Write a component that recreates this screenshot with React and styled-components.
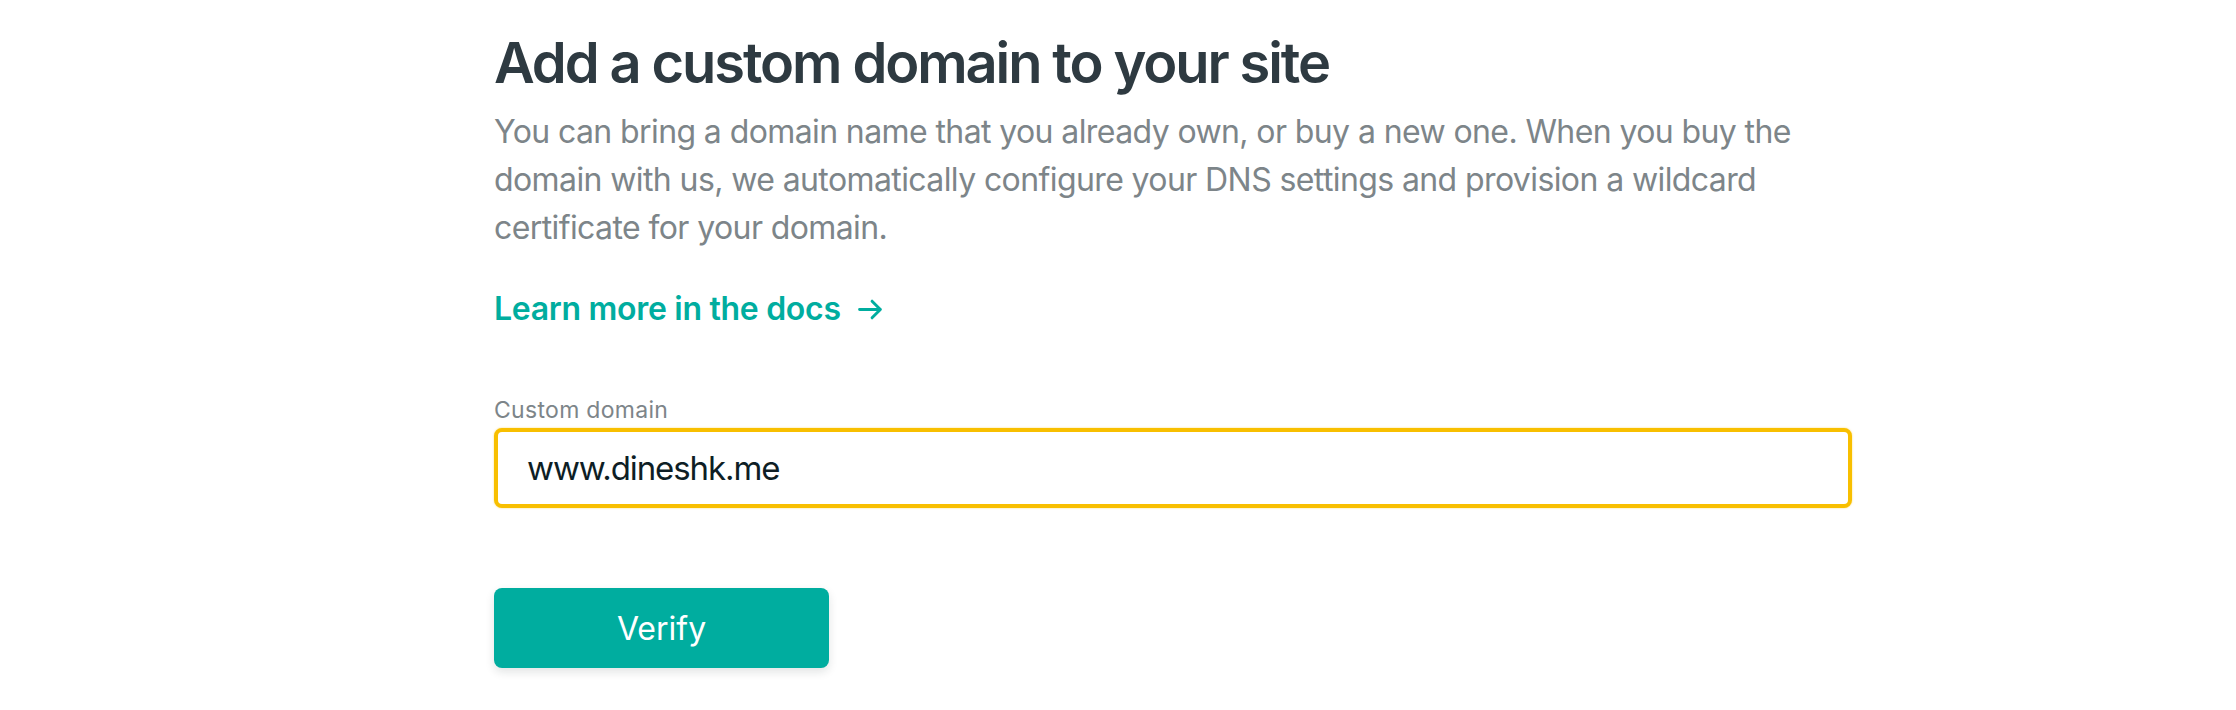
import styled, { createGlobalStyle } from "styled-components";

// page reset
const GlobalStyle = createGlobalStyle`
  html, body {
    margin: 0;
    padding: 0;
    background: #ffffff;
  }
  body {
    font-family: Inter, "Noto Sans", "Liberation Sans", sans-serif;
    -webkit-font-smoothing: antialiased;
  }
`;

const Page = styled.main`
  width: 2236px;
  height: 710px;
  box-sizing: border-box;
  padding: 31px 0 0 494px;
  overflow: hidden;
`;

const Panel = styled.section`
  width: 1358px;
  display: flex;
  flex-direction: column;
  align-items: flex-start;
`;

const Title = styled.h1`
  margin: 0;
  font-size: 56px;
  line-height: 64px;
  font-weight: 600;
  letter-spacing: -2.1px;
  color: #2e3a41;
`;

const Lead = styled.p`
  margin: 13px 0 0;
  font-size: 32px;
  line-height: 48px;
  font-weight: 400;
  letter-spacing: -0.6px;
  color: #7d8589;
`;

const DocsLink = styled.a`
  margin-top: 37px;
  display: inline-flex;
  align-items: center;
  gap: 17px;
  font-size: 32px;
  line-height: 40px;
  font-weight: 600;
  letter-spacing: -0.3px;
  color: #00ad9f;
  text-decoration: none;
  cursor: pointer;
`;

const Field = styled.div`
  margin-top: 67px;
  width: 100%;
  display: flex;
  flex-direction: column;
  gap: 4px;
`;

const Label = styled.label`
  font-size: 23px;
  line-height: 28px;
  letter-spacing: 0.3px;
  color: #7d8589;
`;

const TextInput = styled.input`
  box-sizing: border-box;
  width: 100%;
  height: 80px;
  padding: 0 29px;
  border: 4px solid #f8bf00;
  border-radius: 8px;
  box-shadow: 0 0 2px rgba(248, 191, 0, 0.6);
  font-family: inherit;
  font-size: 33px;
  letter-spacing: -1.1px;
  color: #0e1e25;
  background: #ffffff;
  outline: none;
`;

const PrimaryButton = styled.button`
  margin-top: 80px;
  width: 335px;
  height: 80px;
  border: 0;
  border-radius: 8px;
  background: #00ad9f;
  color: #ffffff;
  font-family: inherit;
  font-size: 32px;
  font-weight: 400;
  box-shadow: 0 4px 10px rgba(14, 30, 37, 0.12);
  cursor: pointer;
`;

function ArrowRight() {
  return (
    <svg width="25" height="25" viewBox="0 0 24 24" fill="none">
      <path
        d="M1.5 12h20M13.5 4l8 8-8 8"
        stroke="currentColor"
        strokeWidth="2.8"
        strokeLinecap="round"
        strokeLinejoin="round"
      />
    </svg>
  );
}

function App() {
  return (
    <>
      <GlobalStyle />
      <Page>
        <Panel>
          <Title>Add a custom domain to your site</Title>
          <Lead>
            You can bring a domain name that you already own, or buy a new one. When you buy the
            domain with us, we automatically configure your DNS settings and provision a wildcard
            certificate for your domain.
          </Lead>

          <DocsLink>
            Learn more in the docs <ArrowRight />
          </DocsLink>

          {/* domain form */}
          <Field>
            <Label htmlFor="custom-domain">Custom domain</Label>
            <TextInput id="custom-domain" defaultValue="www.dineshk.me" />
          </Field>

          <PrimaryButton>Verify</PrimaryButton>
        </Panel>
      </Page>
    </>
  );
}

export default App;
